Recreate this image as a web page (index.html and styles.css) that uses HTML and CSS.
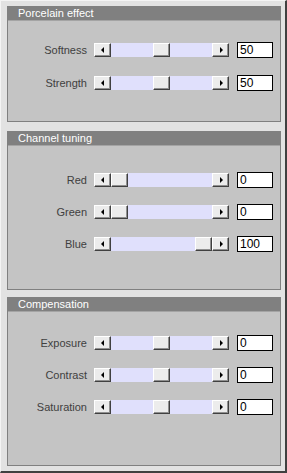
FILE: index.html
```html
<!DOCTYPE html>
<html>

<head>
    <title>image filters</title>
    <link rel="stylesheet" href="styles.css">
</head>

<body>
    <div class="frame">

        <div class="panel panel-porcelain">
            <div class="panel-title">Porcelain effect</div>
            <div class="panel-body">
                <div class="row">
                    <span class="label">Softness</span>
                    <div class="scrollbar">
                        <div class="arrow arrow-left"><i></i></div>
                        <div class="track"><div class="thumb" style="margin-left:42px"></div></div>
                        <div class="arrow arrow-right"><i></i></div>
                    </div>
                    <input class="value" type="text" value="50">
                </div>
                <div class="row">
                    <span class="label">Strength</span>
                    <div class="scrollbar">
                        <div class="arrow arrow-left"><i></i></div>
                        <div class="track"><div class="thumb" style="margin-left:42px"></div></div>
                        <div class="arrow arrow-right"><i></i></div>
                    </div>
                    <input class="value" type="text" value="50">
                </div>
            </div>
        </div>

        <div class="panel panel-channel">
            <div class="panel-title">Channel tuning</div>
            <div class="panel-body">
                <div class="row">
                    <span class="label">Red</span>
                    <div class="scrollbar">
                        <div class="arrow arrow-left"><i></i></div>
                        <div class="track"><div class="thumb" style="margin-left:0px"></div></div>
                        <div class="arrow arrow-right"><i></i></div>
                    </div>
                    <input class="value" type="text" value="0">
                </div>
                <div class="row">
                    <span class="label">Green</span>
                    <div class="scrollbar">
                        <div class="arrow arrow-left"><i></i></div>
                        <div class="track"><div class="thumb" style="margin-left:0px"></div></div>
                        <div class="arrow arrow-right"><i></i></div>
                    </div>
                    <input class="value" type="text" value="0">
                </div>
                <div class="row">
                    <span class="label">Blue</span>
                    <div class="scrollbar">
                        <div class="arrow arrow-left"><i></i></div>
                        <div class="track"><div class="thumb" style="margin-left:84px"></div></div>
                        <div class="arrow arrow-right"><i></i></div>
                    </div>
                    <input class="value" type="text" value="100">
                </div>
            </div>
        </div>

        <div class="panel panel-compensation">
            <div class="panel-title">Compensation</div>
            <div class="panel-body">
                <div class="row">
                    <span class="label">Exposure</span>
                    <div class="scrollbar">
                        <div class="arrow arrow-left"><i></i></div>
                        <div class="track"><div class="thumb" style="margin-left:42px"></div></div>
                        <div class="arrow arrow-right"><i></i></div>
                    </div>
                    <input class="value" type="text" value="0">
                </div>
                <div class="row">
                    <span class="label">Contrast</span>
                    <div class="scrollbar">
                        <div class="arrow arrow-left"><i></i></div>
                        <div class="track"><div class="thumb" style="margin-left:42px"></div></div>
                        <div class="arrow arrow-right"><i></i></div>
                    </div>
                    <input class="value" type="text" value="0">
                </div>
                <div class="row">
                    <span class="label">Saturation</span>
                    <div class="scrollbar">
                        <div class="arrow arrow-left"><i></i></div>
                        <div class="track"><div class="thumb" style="margin-left:42px"></div></div>
                        <div class="arrow arrow-right"><i></i></div>
                    </div>
                    <input class="value" type="text" value="0">
                </div>
            </div>
        </div>

    </div>
</body>

</html>
```

FILE: styles.css
```css
html, body {
    margin: 0;
    padding: 0;
}

body {
    font-family: "Liberation Sans", Arial, sans-serif;
    font-size: 11px;
    background-color: #e2e2e2;
}

.frame {
    box-sizing: border-box;
    width: 287px;
    height: 473px;
    padding: 5px 4px 5px 6px;
    background-color: #e2e2e2;
    border-top: 1px solid #f4f4f4;
    border-left: 1px solid #f4f4f4;
    border-right: 2px solid #404040;
    border-bottom: 2px solid #404040;
}

.panel {
    box-sizing: border-box;
    border: 1px solid #808080;
    background-color: #c4c4c4;
}

.panel-porcelain {
    height: 116px;
}
.panel-channel {
    height: 159px;
    margin-top: 9px;
}
.panel-compensation {
    height: 169px;
    margin-top: 7px;
}

.panel-title {
    height: 13px;
    line-height: 13px;
    padding-left: 10px;
    background-color: #808080;
    border-bottom: 1px solid #a4a4a4;
    color: #fff;
}

.panel-body {
    display: flex;
    flex-direction: column;
    gap: 16px;
}

.panel-porcelain .panel-body {
    padding-top: 21px;
    gap: 17px;
}
.panel-channel .panel-body {
    padding-top: 26px;
}
.panel-compensation .panel-body {
    padding-top: 23px;
}

.row {
    display: flex;
    align-items: center;
    height: 16px;
}

.label {
    width: 79px;
    margin-right: 7px;
    text-align: right;
    color: #404040;
}

/* scrollbar */
.scrollbar {
    display: flex;
    width: 135px;
    height: 14px;
    margin-right: 8px;
}

.arrow,
.thumb {
    box-sizing: border-box;
    width: 17px;
    height: 14px;
    background-color: #ececec;
    border-top: 1px solid #fff;
    border-left: 1px solid #fff;
    border-right: 1px solid #404040;
    border-bottom: 1px solid #404040;
    box-shadow: inset -1px -1px 0 #909090;
}

.arrow {
    display: flex;
    align-items: center;
    justify-content: center;
}

.arrow i {
    width: 0;
    height: 0;
    border-top: 3px solid transparent;
    border-bottom: 3px solid transparent;
}

.arrow-left i {
    border-right: 3px solid #000;
    margin-right: 1px;
}

.arrow-right i {
    border-left: 3px solid #000;
    margin-left: 1px;
}

.track {
    display: flex;
    width: 101px;
    height: 14px;
    background-color: #e0e0fc;
}

.value {
    box-sizing: border-box;
    width: 36px;
    height: 16px;
    margin: 0;
    padding: 0 0 0 2px;
    border: 1px solid #000;
    background-color: #fff;
    font-family: "Liberation Sans", Arial, sans-serif;
    font-size: 12px;
    color: #000;
    outline: none;
}
```
